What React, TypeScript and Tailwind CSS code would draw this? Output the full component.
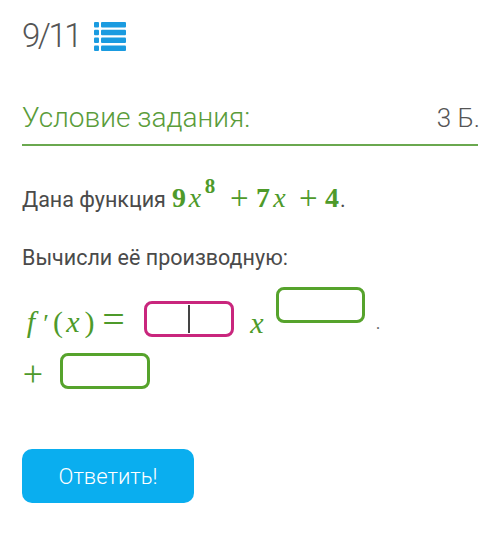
import React from "react";

const green = "text-[#4e9a2a]";

function ListIcon() {
  return (
    <svg width="32" height="29" viewBox="0 0 32 29" className="text-[#1a9be0]" fill="currentColor">
      <rect x="0" y="0" width="5" height="5.5" rx="1" />
      <rect x="7" y="0" width="25" height="5.5" rx="1" />
      <rect x="0" y="7.8" width="5" height="5.5" rx="1" />
      <rect x="7" y="7.8" width="25" height="5.5" rx="1" />
      <rect x="0" y="15.6" width="5" height="5.5" rx="1" />
      <rect x="7" y="15.6" width="25" height="5.5" rx="1" />
      <rect x="0" y="23.4" width="5" height="5.5" rx="1" />
      <rect x="7" y="23.4" width="25" height="5.5" rx="1" />
    </svg>
  );
}

export default function App() {
  const math = "font-['Liberation_Serif',serif]";
  return (
    <div className="w-[500px] h-[548px] bg-white px-[22px] pt-[14px] font-['Roboto',sans-serif] text-[#4a4a4a]">
      {/* progress */}
      <div className="flex items-center gap-[14px] h-[44px]">
        <span className="text-[33px] font-light text-[#555] tracking-[-2.5px]">9/11</span>
        <ListIcon />
      </div>

      {/* header */}
      <div className="mt-[43px] flex items-end justify-between border-b-2 border-[#6aa84f] pb-[9px]">
        <span className="text-[28px] font-light text-[#5a9c3a] leading-[34px]">Условие задания:</span>
        <span className="text-[26px] font-light text-[#555] leading-[34px] mr-[-2px]">3 Б.</span>
      </div>

      {/* statement */}
      <div className="mt-[30px] h-[40px] flex items-baseline text-[21.5px] leading-[40px]">
        <span>Дана функция</span>
        <span className={`ml-[5px] ${math} ${green} text-[28px] whitespace-nowrap`}>
          <span className="inline-block w-[16px] text-center font-bold">9</span>
          <i className="inline-block w-[16px] text-center">x</i>
          <span className="inline-block w-[14px] text-center text-[21px] font-bold relative top-[-14px]">8</span>
          <span className="inline-block w-[39px] pl-[6px] text-center text-[33px] relative top-[2px]">+</span>
          <span className="inline-block w-[14px] text-center font-bold">7</span>
          <i className="inline-block w-[19px] text-center">x</i>
          <span className="inline-block w-[35px] pl-[4px] text-center text-[33px] relative top-[2px]">+</span>
          <span className="inline-block w-[16px] text-center font-bold">4</span>
        </span>
        <span>.</span>
      </div>

      <div className="mt-[27px] text-[21.5px] leading-[30px]">Вычисли её производную:</div>

      {/* answer row 1 */}
      <div className={`mt-[6px] flex items-end h-[58px] ${math} ${green} text-[30px]`}>
        <span className="mb-[-7px] whitespace-nowrap flex items-baseline">
          <i className="w-[18px] text-center">f</i>
          <span className="w-[12px] text-center text-[26px]">′</span>
          <span className="w-[12px] text-center">(</span>
          <i className="w-[18px] text-center">x</i>
          <span className="w-[15px] text-center">)</span>
          <span className="w-[33px] text-center text-[40px] leading-none relative top-[1px]">=</span>
        </span>
        <div className="ml-[14px] w-[90px] h-[36px] shrink-0 rounded-[8px] border-[3px] border-[#c9267d] flex items-center justify-center">
          <div className="w-[1.5px] h-[28px] bg-[#444]" />
        </div>
        <i className="ml-[8px] mb-[-8px] w-[30px] text-center">x</i>
        <div className="ml-[4px] mb-[14px] w-[89px] h-[36px] shrink-0 rounded-[8px] border-[3px] border-[#56a32c]" />
        <span className="ml-[11px] mb-[1px] text-[#666] text-[16px]">.</span>
      </div>

      {/* answer row 2 */}
      <div className={`mt-[16px] flex items-center ${math} ${green} text-[36px]`}>
        <span className="w-[22px] text-center leading-none relative top-[3px]">+</span>
        <div className="ml-[16px] w-[90px] h-[36px] rounded-[8px] border-[3px] border-[#56a32c]" />
      </div>

      <button className="mt-[60px] w-[172px] h-[54px] rounded-[10px] bg-[#0aaeef] text-white text-[22px] font-light">
        Ответить!
      </button>
    </div>
  );
}
